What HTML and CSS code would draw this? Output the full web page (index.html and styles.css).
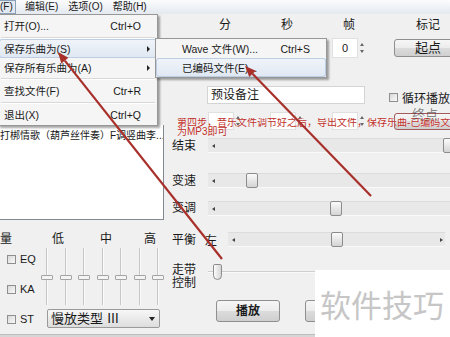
FILE: index.html
```html
<!DOCTYPE html>
<html lang="zh-CN">
<head>
    <meta charset="UTF-8">
    <title>乐曲编辑</title>
    <link rel="stylesheet" href="styles.css">
</head>
<body>
<div class="window">
    <!-- Menu bar -->
    <div class="menubar">
        <span class="mb-item pressed">(F)</span>
        <span class="mb-item">编辑(E)</span>
        <span class="mb-item">选项(O)</span>
        <span class="mb-item">帮助(H)</span>
    </div>

    <div class="client">
        <!-- Left side: playlist and mixer -->
        <div class="side">
            <div class="side-top"></div>
            <div class="listbox">
                <div class="list-row">打梆情歌（葫芦丝伴奏）F调竖曲李...</div>
            </div>
            <div class="mixer">
                <div class="mix-head"><span>量</span><span>低</span><span>中</span><span>高</span></div>
                <div class="mix-body">
                    <div class="checks">
                        <label class="check"><i class="box"></i>EQ</label>
                        <label class="check"><i class="box"></i>KA</label>
                        <label class="check"><i class="box"></i>ST</label>
                    </div>
                    <div class="eq">
                        <div class="vsliders">
                            <div class="vslider"><i class="vthumb"></i></div>
                            <div class="vslider"><i class="vthumb"></i></div>
                            <div class="vslider"><i class="vthumb"></i></div>
                            <div class="vslider"><i class="vthumb"></i></div>
                            <div class="vslider"><i class="vthumb"></i></div>
                            <div class="vslider"><i class="vthumb"></i></div>
                            <div class="vslider"><i class="vthumb"></i></div>
                        </div>
                        <div class="combo"><span>慢放类型 Ⅲ</span><i class="caret"></i></div>
                    </div>
                </div>
            </div>
        </div>

        <!-- Right side: time fields and sliders -->
        <div class="panel">
            <div class="times head"><span>分</span><span>秒</span><span>帧</span><span>标记</span></div>
            <div class="times spin-row">
                <div class="spin"><div class="spin-box"></div><div class="spin-btns"><i class="up"></i><i class="down"></i></div></div>
                <div class="spin"><div class="spin-box"></div><div class="spin-btns"><i class="up"></i><i class="down"></i></div></div>
                <div class="spin"><div class="spin-box">0</div><div class="spin-btns"><i class="up"></i><i class="down"></i></div></div>
                <div class="btn">起点</div>
            </div>

            <div class="note-row">
                <div class="note">预设备注</div>
                <label class="check loop"><i class="box"></i>循环播放</label>
            </div>

            <div class="times spin-row second">
                <div class="spin"><div class="spin-box"></div><div class="spin-btns"><i class="up"></i><i class="down"></i></div></div>
                <div class="spin"><div class="spin-box"></div><div class="spin-btns"><i class="up"></i><i class="down"></i></div></div>
                <div class="spin"><div class="spin-box"></div><div class="spin-btns"><i class="up"></i><i class="down"></i></div></div>
                <div class="btn mark-end"></div>
            </div>

            <div class="slider-row r-end">
                <span class="lbl">结束</span>
                <div class="track"><i class="arrow-l"></i><i class="thumb" style="left:235px"></i></div>
            </div>
            <div class="slider-row r-speed">
                <span class="lbl">变速</span>
                <div class="track"><i class="arrow-l"></i><i class="thumb" style="left:38px"></i></div>
            </div>
            <div class="slider-row r-pitch">
                <span class="lbl">变调</span>
                <div class="track"><i class="arrow-l"></i><i class="thumb" style="left:122px"></i></div>
            </div>
            <div class="slider-row r-bal">
                <span class="lbl short">平衡</span>
                <span class="side-lbl">左</span>
                <div class="track fixed"><i class="arrow-l"></i><i class="thumb" style="left:103px"></i><i class="arrow-r"></i></div>
            </div>
            <div class="slider-row r-tape">
                <span class="lbl two">走带<br>控制</span>
                <div class="tape"><i class="tape-thumb"></i></div>
            </div>
            <div class="r-btns">
                <div class="btn big">播放</div>
                <div class="btn big"></div>
            </div>
        </div>
    </div>
    <div class="status"></div>

    <!-- Open menu -->
    <div class="menu">
        <div class="mi"><span>打开(O)...</span><span>Ctrl+O</span><span></span></div>
        <div class="sep"></div>
        <div class="mi sm hl"><span>保存乐曲为(S)</span><span></span><span class="sub-arrow"></span></div>
        <div class="mi sm"><span>保存所有乐曲为(A)</span><span></span><span class="sub-arrow"></span></div>
        <div class="sep"></div>
        <div class="mi"><span>查找文件(F)</span><span>Ctr+R</span><span></span></div>
        <div class="sep"></div>
        <div class="mi"><span>退出(X)</span><span>Ctrl+Q</span><span></span></div>
    </div>
    <div class="submenu">
        <div class="si"><span>Wave 文件(W)...</span><span>Ctrl+S</span></div>
        <div class="si hl"><span>已编码文件(E)...</span><span></span></div>
    </div>

    <div class="note-red">第四步，音乐文件调节好之后，导出文件，保存乐曲-已编码文件<br>为MP3即可</div>
    <div class="end-label">终点</div>

    <svg class="arrows" width="450" height="337" viewBox="0 0 450 337">
        <line x1="222" y1="259" x2="64.8" y2="60.6" />
        <polygon points="58,52 68.4,57.8 61.3,63.4" />
        <line x1="371" y1="196" x2="252.5" y2="73.8" />
        <polygon points="245,66 255.7,70.7 249.3,77" />
    </svg>

    <div class="wm">软件技巧</div>
</div>
</body>
</html>
```

FILE: styles.css
```css
* {
    margin: 0;
    padding: 0;
    box-sizing: border-box;
}

body {
    width: 450px;
    height: 337px;
    overflow: hidden;
    background-color: #f0f0f0;
    font-family: "Liberation Sans", "Noto Sans CJK SC", sans-serif;
    color: #1a1a1a;
    font-size: 12px;
}

.window {
    position: relative;
    width: 450px;
    height: 337px;
    overflow: hidden;
}

/* menu bar */
.menubar {
    height: 14px;
    display: flex;
    gap: 8px;
    background: linear-gradient(#fbfcfd, #e4e9f0);
    font-size: 10px;
    line-height: 13px;
}

.mb-item {
    padding: 0 1px;
}

.mb-item.pressed {
    width: 16px;
    padding: 0;
    border: 1px solid #8a9fb8;
    border-left: none;
    background-color: #e3e9f1;
    line-height: 12px;
}

.client {
    display: flex;
    height: 320px;
}

/* left side */
.side {
    width: 164px;
    flex: none;
    display: flex;
    flex-direction: column;
}

.side-top {
    height: 111px;
}

.listbox {
    height: 95px;
    background-color: #fff;
    border-right: 1px solid #828790;
    border-bottom: 1px solid #828790;
    overflow: hidden;
}

.list-row {
    padding-top: 4px;
    font-size: 10px;
    line-height: 14px;
    white-space: nowrap;
}

.mixer {
    flex: 1;
    padding-top: 12px;
}

.mix-head {
    display: grid;
    grid-template-columns: 52px 48px 44px auto;
    height: 14px;
    font-size: 12px;
    line-height: 14px;
}

.mix-body {
    display: flex;
}

.checks {
    width: 42px;
    flex: none;
    display: flex;
    flex-direction: column;
    margin-top: -2px;
}

.check {
    display: flex;
    align-items: center;
    gap: 4px;
    height: 30px;
    padding-left: 7px;
    font-size: 11px;
}

.box {
    width: 9px;
    height: 9px;
    border: 1px solid #8f8f8f;
    background: linear-gradient(135deg, #d8d8d8, #fafafa);
}

.vsliders {
    display: flex;
    gap: 8.5px;
    height: 57px;
    margin-top: 2px;
}

.vslider {
    position: relative;
    width: 10px;
    background: linear-gradient(90deg, transparent 4px, #c6c6c6 4px, #c6c6c6 5px, #fafafa 5px, #fafafa 6px, transparent 6px);
}

.vthumb {
    position: absolute;
    top: 27px;
    left: -1px;
    width: 12px;
    height: 5px;
    border: 1px solid #a3a3a3;
    border-radius: 1px;
    background-color: #f4f4f4;
}

.combo {
    display: flex;
    align-items: center;
    justify-content: space-between;
    width: 113px;
    height: 19px;
    margin: 4px 0 0 5px;
    padding: 0 4px 0 3px;
    border: 1px solid #9a9a9a;
    border-radius: 2px;
    background: linear-gradient(#f7f7f7, #dddddd);
    font-size: 13px;
    line-height: 17px;
}

.caret {
    border-top: 4px solid #222;
    border-left: 3px solid transparent;
    border-right: 3px solid transparent;
}

/* right panel */
.panel {
    flex: 1;
    min-width: 0;
    padding-left: 8px;
}

.times {
    display: grid;
    grid-template-columns: 34px 34px 34px 68px;
    column-gap: 28px;
    margin-left: 36px;
}

.head {
    height: 22px;
    line-height: 22px;
    font-size: 12px;
    text-align: center;
}

.spin-row {
    height: 20px;
    margin-top: 2px;
    align-items: center;
}

.spin {
    display: flex;
    height: 20px;
}

.spin-box {
    width: 26px;
    background-color: #fff;
    border: 1px solid #e0e0e0;
    font-size: 11px;
    line-height: 18px;
    text-align: center;
}

.spin-btns {
    width: 8px;
    display: flex;
    flex-direction: column;
    justify-content: center;
    align-items: center;
    gap: 4px;
}

.spin-btns i {
    border-left: 2px solid transparent;
    border-right: 2px solid transparent;
}

.spin-btns .up {
    border-bottom: 3px solid #666;
}

.spin-btns .down {
    border-top: 3px solid #666;
}

.btn {
    height: 18px;
    border: 1px solid #8e8f8f;
    border-radius: 3px;
    background: linear-gradient(#f6f6f6 0%, #ececec 50%, #dcdcdc 50%, #cfcfcf 100%);
    font-size: 13px;
    line-height: 16px;
    text-align: center;
}

.btn.mark-end {
    height: 17px;
    border-color: #a25a5a;
}

.second {
    height: 18px;
    margin-top: 8px;
}

.second .spin {
    height: 18px;
}

.note-row {
    display: flex;
    align-items: center;
    height: 18px;
    margin-top: 28px;
}

.note {
    width: 164px;
    height: 18px;
    margin-left: 35px;
    padding-left: 3px;
    background-color: #fff;
    border: 1px solid #d4d4d4;
    font-size: 12px;
    line-height: 16px;
}

.check.loop {
    height: 18px;
    margin-left: 24px;
    margin-top: 4px;
    padding-left: 0;
    font-size: 12px;
    white-space: nowrap;
}

/* sliders */
.slider-row {
    display: flex;
    align-items: center;
    height: 15px;
}

.lbl {
    width: 36px;
    flex: none;
    font-size: 12px;
    line-height: 14px;
}

.lbl.short {
    width: 33px;
}

.lbl.two {
    line-height: 13px;
}

.side-lbl {
    width: 23px;
    flex: none;
    font-size: 12px;
}

.track {
    position: relative;
    flex: 1;
    height: 15px;
    background-color: #e8e8e8;
    border-top: 1px solid #dcdcdc;
    border-bottom: 1px solid #f9f9f9;
}

.track.fixed {
    flex: none;
    width: 217px;
}

.arrow-l,
.arrow-r {
    position: absolute;
    top: 5px;
    border-top: 2px solid transparent;
    border-bottom: 2px solid transparent;
}

.arrow-l {
    left: 4px;
    border-right: 3px solid #444;
}

.arrow-r {
    right: 2px;
    border-left: 3px solid #444;
}

.thumb {
    position: absolute;
    top: -1px;
    width: 12px;
    height: 15px;
    border: 1px solid #8c8c8c;
    border-radius: 2px;
    background: linear-gradient(#fbfbfb, #d4d4d4);
}

.r-end {
    margin-top: 8px;
}

.r-speed {
    margin-top: 20px;
}

.r-pitch {
    height: 16px;
    margin-top: 12px;
}

.r-bal {
    margin-top: 16px;
}

.r-tape {
    height: 28px;
    margin-top: 17px;
    align-items: flex-start;
}

.tape {
    flex: 1;
    height: 28px;
    display: flex;
    background: linear-gradient(transparent 7px, #cfcfcf 7px, #cfcfcf 8px, #fafafa 8px, #fafafa 9px, transparent 9px);
}

.tape-thumb {
    width: 9px;
    height: 16px;
    margin-left: 5px;
    border: 1px solid #8c8c8c;
    border-radius: 2px 2px 5px 5px;
    background: linear-gradient(90deg, #fbfbfb, #d6d6d6);
}

.r-btns {
    display: flex;
    gap: 25px;
    height: 22px;
    margin-top: 8px;
    padding-left: 44px;
}

.btn.big {
    width: 64px;
    height: 22px;
    font-size: 12px;
    font-weight: bold;
    line-height: 20px;
}

.status {
    height: 3px;
    background-color: #d6d6d6;
    border-top: 1px solid #bdbdbd;
}

/* open menus */
.menu {
    position: absolute;
    left: -2px;
    top: 14px;
    width: 160px;
    background-color: #f5f5f5;
    border: 1px solid #979797;
    box-shadow: 2px 2px 2px rgba(0, 0, 0, 0.35);
    font-size: 10.5px;
}

.mi {
    display: grid;
    grid-template-columns: 1fr auto 14px;
    align-items: center;
    height: 21px;
    padding: 0 2px 0 5px;
    white-space: nowrap;
}

.mi.sm {
    height: 19px;
}

.hl {
    background: linear-gradient(#f1f5fa, #dfe7f1);
    box-shadow: inset 0 0 0 1px #bccee3;
    border-radius: 3px;
}

.sub-arrow {
    justify-self: center;
    border-left: 3px solid #222;
    border-top: 3px solid transparent;
    border-bottom: 3px solid transparent;
}

.sep {
    height: 3px;
    margin: 0 2px;
    background: linear-gradient(transparent 1px, #d9d9d9 1px, #d9d9d9 2px, #ffffff 2px);
}

.submenu {
    position: absolute;
    left: 155px;
    top: 38px;
    width: 172px;
    height: 40px;
    background-color: #f5f5f5;
    border: 1px solid #979797;
    box-shadow: 2px 2px 2px rgba(0, 0, 0, 0.35);
    font-size: 10.5px;
}

.si {
    display: flex;
    justify-content: space-between;
    align-items: center;
    height: 19px;
    padding: 0 16px 0 26px;
    white-space: nowrap;
}

/* annotation overlays */
.note-red {
    position: absolute;
    left: 177px;
    top: 118px;
    width: 273px;
    font-size: 10px;
    line-height: 9px;
    color: #c0302a;
    white-space: nowrap;
    overflow: hidden;
    text-shadow: 0 0 1px #fff;
}

.end-label {
    position: absolute;
    left: 412px;
    top: 108px;
    font-size: 13px;
    line-height: 14px;
    color: rgba(40, 40, 40, 0.55);
}

.arrows {
    position: absolute;
    left: 0;
    top: 0;
    pointer-events: none;
}

.arrows line {
    stroke: #a8302b;
    stroke-width: 2.2;
}

.arrows polygon {
    fill: #a8302b;
}

.wm {
    position: absolute;
    left: 315px;
    top: 270px;
    width: 135px;
    height: 67px;
    padding: 18px 0 0 5px;
    background-color: #fff;
    color: #c6c6c6;
    font-family: "Noto Sans CJK SC", sans-serif;
    font-size: 31px;
    line-height: 31px;
    white-space: nowrap;
}
```
